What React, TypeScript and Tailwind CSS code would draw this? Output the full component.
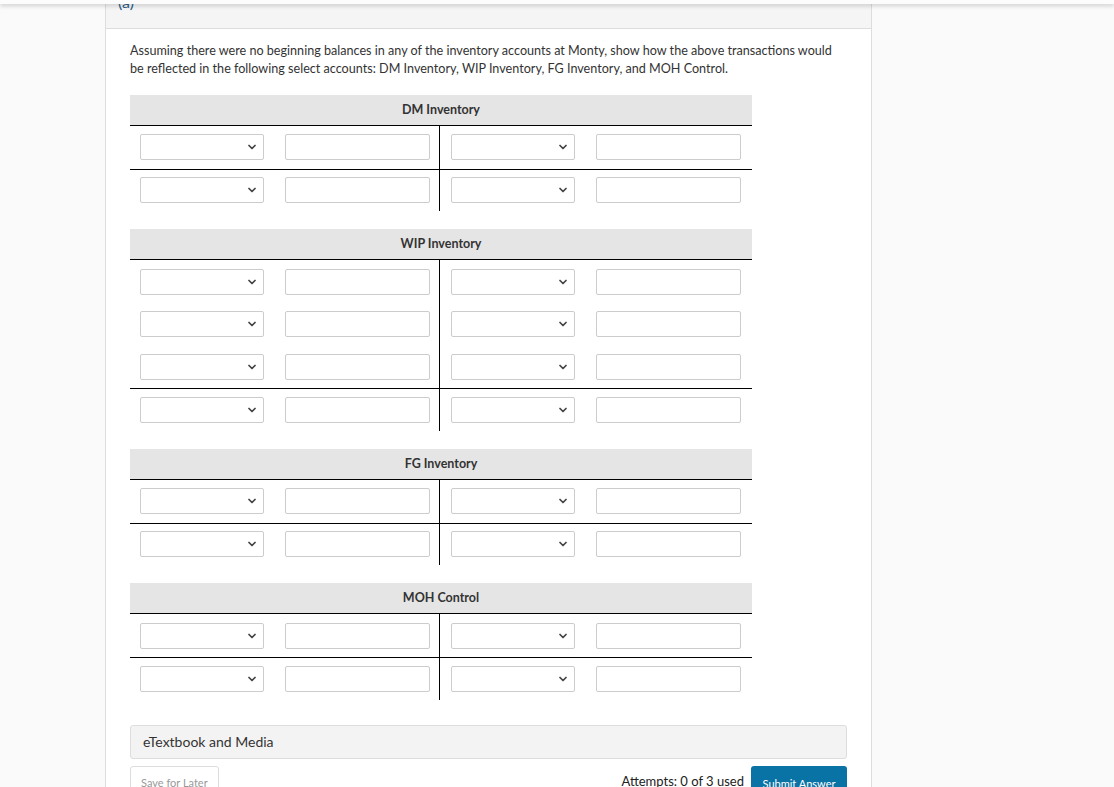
import { ChevronDown } from "lucide-react";

interface TAccountProps {
  title: string;
  entries: number;
}

function SelectBox() {
  return (
    <div className="w-[124px] h-[26px] border border-[#cccccc] rounded-[2px] bg-white flex items-center justify-end pr-[5px]">
      <ChevronDown size={12} strokeWidth={3.5} className="text-[#444]" />
    </div>
  );
}

function TextBox() {
  return <div className="w-[145px] h-[26px] border border-[#cccccc] rounded-[2px] bg-white" />;
}

function Row({ balance }: { balance?: boolean }) {
  return (
    <div className={`flex h-[42.67px] ${balance ? "border-t border-black" : ""}`}>
      <div className="w-[310px] border-r border-black flex items-center gap-[21px] pl-[10px]">
        <SelectBox />
        <TextBox />
      </div>
      <div className="flex-1 flex items-center gap-[21px] pl-[11px]">
        <SelectBox />
        <TextBox />
      </div>
    </div>
  );
}

function TAccount({ title, entries }: TAccountProps) {
  const rows = Array.from({ length: entries });
  return (
    <div className="w-[622px]">
      <div className="h-[31px] bg-[#e5e5e5] border-b border-black flex items-center justify-center text-[12.5px] font-bold text-[#333]">
        {title}
      </div>
      {rows.map((_, i) => (
        <Row key={i} />
      ))}
      <Row balance />
    </div>
  );
}

export default function App() {
  return (
    <div
      className="relative min-h-screen bg-[#fafafa] overflow-hidden"
      style={{ fontFamily: "Lato, 'Open Sans', sans-serif" }}
    >
      <div className="absolute top-0 left-0 right-0 h-[4px] bg-[#fcfcfc] shadow-[0_2px_4px_rgba(0,0,0,0.18)] z-10" />

      <div className="ml-[105px] w-[767px] bg-white border-x border-[#dddddd] min-h-screen">
        <div className="h-[29px] bg-[#f5f5f5] border-b border-[#dddddd] overflow-hidden pl-[12px]">
          <div className="-mt-[6px] text-[16px] leading-[16px] text-[#2f5f8a]">(a)</div>
        </div>

        <div className="px-[24px] pt-[13px]">
          <p className="text-[12.6px] leading-[18px] text-[#333] w-[712px]">
            Assuming there were no beginning balances in any of the inventory accounts at Monty, show how the above transactions would be reflected in the following select accounts: DM Inventory, WIP Inventory, FG Inventory, and MOH Control.
          </p>

          <div className="mt-[17px] flex flex-col gap-[18px]">
            <TAccount title="DM Inventory" entries={1} />
            <TAccount title="WIP Inventory" entries={3} />
            <TAccount title="FG Inventory" entries={1} />
            <TAccount title="MOH Control" entries={1} />
          </div>

          <div className="mt-[25px] h-[34px] bg-[#f3f3f3] border border-[#dddddd] rounded-[3px] flex items-center px-[12px] text-[14px] text-[#333]">
            eTextbook and Media
          </div>

          <div className="mt-[7px] flex items-start justify-between">
            <button className="h-[34px] px-[10px] pt-[2px] border border-[#dddddd] rounded-[3px] bg-white text-[11px] text-[#999] flex items-center">
              Save for Later
            </button>
            <div className="flex items-start gap-[7px]">
              <span className="pt-[6px] text-[13px] text-[#222]">Attempts: 0 of 3 used</span>
              <button className="h-[34px] w-[96px] bg-[#0a73a5] rounded-[3px] text-[11px] text-white pt-[4px] flex items-center justify-center">
                Submit Answer
              </button>
            </div>
          </div>
        </div>
      </div>
    </div>
  );
}
